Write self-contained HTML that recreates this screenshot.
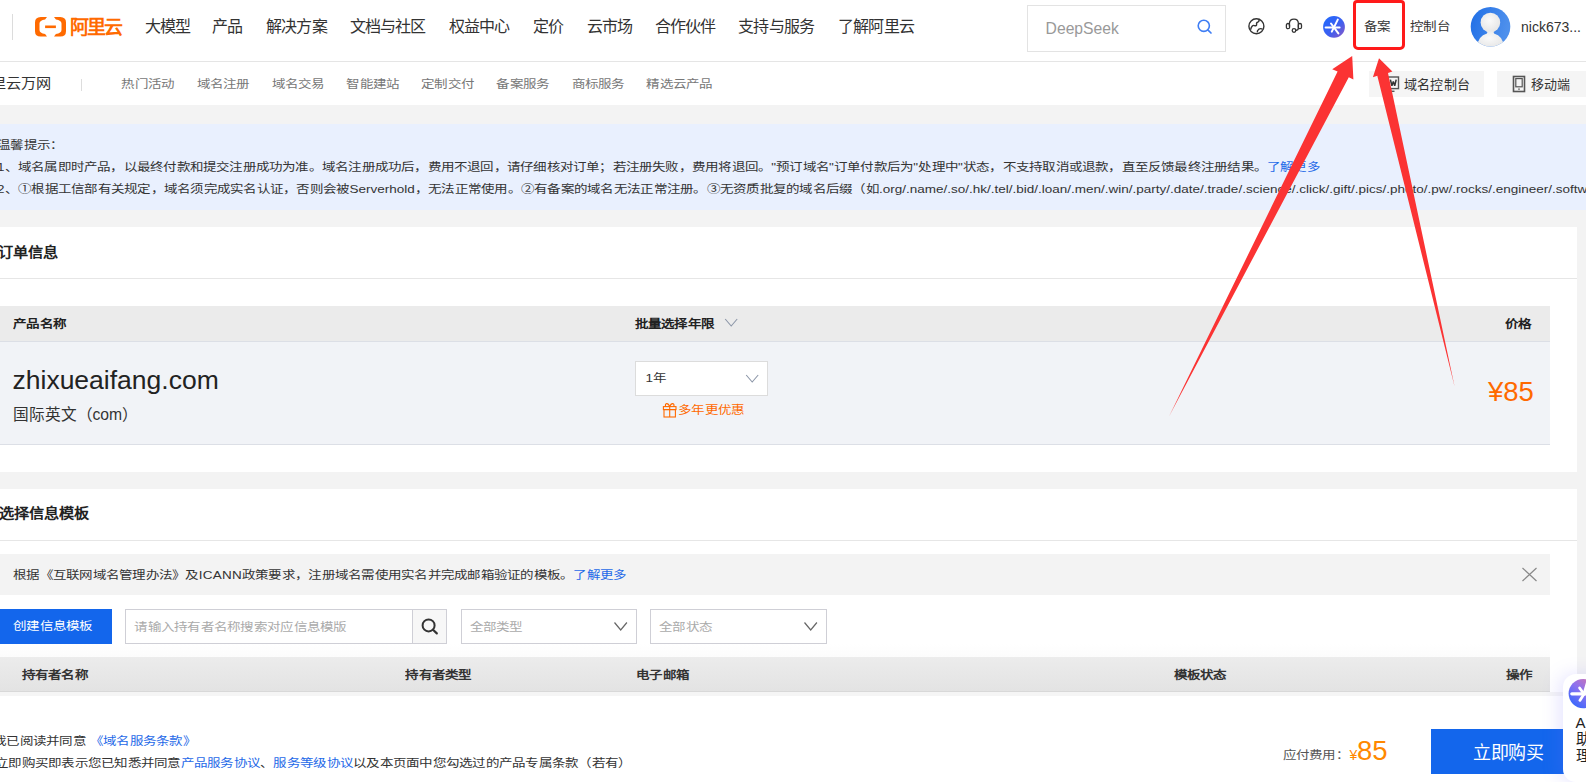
<!DOCTYPE html>
<html lang="zh-CN"><head><meta charset="utf-8">
<style>
*{margin:0;padding:0;box-sizing:border-box}
html,body{width:1586px;height:782px;overflow:hidden;background:#f3f3f3;font-family:"Liberation Sans",sans-serif;color:#333}
.a{position:absolute}
.t{position:absolute;white-space:nowrap;line-height:1}
.n{font-size:16px;letter-spacing:-0.8px;color:#333;top:19px}
.s{font-size:13.5px;letter-spacing:.26px;color:#777;top:78.3px}
.b{font-weight:bold}
.ln{color:#1f6ae8}
.l0{letter-spacing:0}
.q{transform:scaleY(.85);transform-origin:0 46%}
.q2{transform:scaleY(.9);transform-origin:0 46%}
</style></head><body>

<!-- top bar -->
<div class="a" style="left:0;top:0;width:1586px;height:61px;background:#fff"></div>
<div class="a" style="left:0;top:61px;width:1586px;height:1px;background:#e5e5e5"></div>
<div class="a" style="left:12px;top:14px;width:1px;height:26px;background:#dcdcdc"></div>

<!-- logo -->
<svg class="a" style="left:35px;top:17px" width="32" height="20" viewBox="0 0 32 20">
  <path d="M5.7 0 L12 0 L10.1 2.6 Q4.6 3.4 4.5 6.5 L4.5 13 Q4.6 16.2 10.1 17 L12 19.6 L5.7 19.6 Q0 19.4 0 14.2 L0 5.4 Q0 0.2 5.7 0 Z" fill="#ff6a00"/>
  <path d="M25.3 0 L19 0 L20.9 2.6 Q26.4 3.4 26.5 6.5 L26.5 13 Q26.4 16.2 20.9 17 L19 19.6 L25.3 19.6 Q31 19.4 31 14.2 L31 5.4 Q31 0.2 25.3 0 Z" fill="#ff6a00"/>
  <rect x="10.1" y="8.5" width="10.8" height="2.6" fill="#ff6a00"/>
</svg>
<div class="t b" style="left:69.8px;top:17.8px;font-size:19px;letter-spacing:-1.7px;color:#ff6a00">阿里云</div>

<div class="t n" style="left:144.5px">大模型</div>
<div class="t n" style="left:212px">产品</div>
<div class="t n" style="left:266px">解决方案</div>
<div class="t n" style="left:349.6px">文档与社区</div>
<div class="t n" style="left:448.7px">权益中心</div>
<div class="t n" style="left:533px">定价</div>
<div class="t n" style="left:586.5px">云市场</div>
<div class="t n" style="left:654.6px">合作伙伴</div>
<div class="t n" style="left:738.3px">支持与服务</div>
<div class="t n" style="left:838px">了解阿里云</div>

<!-- search -->
<div class="a" style="left:1027.3px;top:5px;width:198.7px;height:46.5px;border:1px solid #e3e3e3;background:#fff"></div>
<div class="t" style="left:1045.6px;top:20.5px;font-size:15.7px;color:#999">DeepSeek</div>
<svg class="a" style="left:1196px;top:18px" width="17" height="17" viewBox="0 0 17 17">
  <circle cx="7.8" cy="7.8" r="5.6" fill="none" stroke="#3f7ef4" stroke-width="1.6"/>
  <path d="M11.8 11.8 L15 15" stroke="#3f7ef4" stroke-width="1.7" stroke-linecap="round"/>
</svg>

<!-- globe -->
<svg class="a" style="left:1246px;top:16px" width="21" height="21" viewBox="0 0 21 21">
  <circle cx="10.4" cy="10.3" r="7.5" fill="none" stroke="#333" stroke-width="1.4"/>
  <path d="M12.9 3.2 Q13.6 5.2 11.8 6.2 Q10.2 6.5 10.6 8.4 Q10.6 10.3 8.4 9.6 Q6.2 8.5 4.5 13.7" fill="none" stroke="#333" stroke-width="1.4"/>
  <path d="M16.6 13.3 Q14.8 12 12.8 13.2 Q11 14.5 11.3 16.3" fill="none" stroke="#333" stroke-width="1.4"/>
</svg>
<!-- headset -->
<svg class="a" style="left:1284px;top:16px" width="20" height="20" viewBox="0 0 20 20">
  <path d="M5.4 10.5 V8 Q5.4 3.2 10 3.2 Q14.4 3.2 14.4 8 V12 Q14.4 14.3 11.6 14.5" fill="none" stroke="#333" stroke-width="1.3"/>
  <rect x="2.4" y="7.5" width="3.2" height="5.2" rx="1.5" fill="none" stroke="#333" stroke-width="1.3"/>
  <rect x="14.3" y="7.5" width="3.2" height="5.2" rx="1.5" fill="none" stroke="#333" stroke-width="1.3"/>
  <circle cx="10" cy="14.5" r="1.8" fill="none" stroke="#333" stroke-width="1.3"/>
</svg>
<!-- gradient ai icon -->
<svg class="a" style="left:1322px;top:15px" width="24" height="24" viewBox="0 0 24 24">
  <defs><linearGradient id="g1" x1="0" y1="0" x2="1" y2="1"><stop offset="0" stop-color="#1f6bff"/><stop offset="0.55" stop-color="#3d5ff0"/><stop offset="1" stop-color="#8d58c4"/></linearGradient></defs>
  <circle cx="12" cy="11.9" r="10.9" fill="url(#g1)"/>
  <path d="M3.6 12.4 H17.6" stroke="#fff" stroke-width="2" stroke-linecap="round"/>
  <path d="M15.8 4.6 L9.8 16.6" stroke="#fff" stroke-width="2" stroke-linecap="round"/>
  <path d="M9 8.5 L16.4 18.4" stroke="#fff" stroke-width="2" stroke-linecap="round"/>
</svg>

<div class="q2 t" style="left:1364px;top:20.2px;font-size:13.5px;color:#333">备案</div>
<div class="q2 t" style="left:1410px;top:20.2px;font-size:13.5px;letter-spacing:.26px;color:#333">控制台</div>

<!-- avatar -->
<svg class="a" style="left:1470px;top:6px" width="41" height="41" viewBox="0 0 41 41">
  <defs>
    <linearGradient id="g2" x1="0" y1="0" x2="1" y2="0.3"><stop offset="0" stop-color="#1f6ee6"/><stop offset="1" stop-color="#4e90ec"/></linearGradient>
    <radialGradient id="g3" cx="0.45" cy="0.4" r="0.6"><stop offset="0" stop-color="#fafafa"/><stop offset="1" stop-color="#e6e6e6"/></radialGradient>
    <clipPath id="cp"><circle cx="20.5" cy="20.7" r="19.8"/></clipPath>
  </defs>
  <circle cx="20.5" cy="20.7" r="19.8" fill="url(#g2)"/>
  <g clip-path="url(#cp)">
    <circle cx="20.4" cy="16.5" r="9.8" fill="url(#g3)"/>
    <path d="M17.5 25.5 H23.5 L24 27.5 Q33.5 30 34 42 H7 Q7.5 30 17 27.5 Z" fill="url(#g3)"/>
  </g>
</svg>
<div class="t" style="left:1521px;top:20px;font-size:14px;color:#333">nick673...</div>

<!-- second row -->
<div class="a" style="left:0;top:62px;width:1586px;height:43px;background:#fff"></div>
<div class="q2 t" style="left:-24px;top:75.8px;font-size:15.2px;color:#333">阿里云万网</div>
<div class="a" style="left:81px;top:78.5px;width:1px;height:12px;background:#ddd"></div>
<div class="q t s" style="left:121.4px">热门活动</div>
<div class="q t s" style="left:196.5px">域名注册</div>
<div class="q t s" style="left:271.7px">域名交易</div>
<div class="q t s" style="left:346.3px">智能建站</div>
<div class="q t s" style="left:421.2px">定制交付</div>
<div class="q t s" style="left:496.4px">备案服务</div>
<div class="q t s" style="left:571.5px">商标服务</div>
<div class="q t s" style="left:646.4px">精选云产品</div>

<div class="a" style="left:1369px;top:71px;width:115px;height:26px;background:#f5f5f5"></div>
<svg class="a" style="left:1387px;top:75px" width="13" height="18" viewBox="0 0 13 18">
  <rect x="1" y="2" width="10.5" height="11.6" fill="none" stroke="#555" stroke-width="1.4"/>
  <path d="M3.4 4.6 L4.9 10.8 L6.3 6.6 L7.7 10.8 L9.2 4.6" fill="none" stroke="#333" stroke-width="1.5" stroke-linejoin="bevel"/>
  <path d="M3.8 16.3 H7.5" stroke="#555" stroke-width="1.4"/>
</svg>
<div class="t" style="left:1404px;top:78px;font-size:13px;letter-spacing:.2px;color:#333">域名控制台</div>
<div class="a" style="left:1497px;top:71px;width:89px;height:26px;background:#f5f5f5"></div>
<svg class="a" style="left:1512px;top:75px" width="15" height="18" viewBox="0 0 15 18">
  <rect x="1.5" y="1.5" width="11" height="15" fill="none" stroke="#555" stroke-width="1.6"/>
  <rect x="3.8" y="3.6" width="6.4" height="8.2" fill="none" stroke="#555" stroke-width="1.2"/>
  <path d="M6.2 14.2 H7.8" stroke="#555" stroke-width="1.2"/>
</svg>
<div class="t" style="left:1531px;top:78px;font-size:13px;color:#333">移动端</div>

<!-- notice -->
<div class="a" style="left:0;top:124px;width:1586px;height:85.5px;background:#e9f0fe"></div>
<div class="q t" style="left:-3px;top:138.6px;font-size:13.5px;letter-spacing:.26px;color:#333">温馨提示：</div>
<div class="q t" style="left:-3px;top:161px;font-size:13.5px;letter-spacing:.215px;color:#333">1、域名属即时产品，以最终付款和提交注册成功为准。域名注册成功后，费用不退回，请仔细核对订单；若注册失败，费用将退回。"预订域名"订单付款后为"处理中"状态，不支持取消或退款，直至反馈最终注册结果。<span class="ln">了解更多</span></div>
<div class="q t" style="left:-3px;top:182.8px;font-size:13.5px;letter-spacing:.26px;color:#333">2、①根据工信部有关规定，域名须完成实名认证，否则会被<span class="l0">Serverhold</span>，无法正常使用。②有备案的域名无法正常注册。③无资质批复的域名后缀（如<span class="l0">.org/.name/.so/.hk/.tel/.bid/.loan/.men/.win/.party/.date/.trade/.science/.click/.gift/.pics/.photo/.pw/.rocks/.engineer/.software/.lol/.link</span></div>

<!-- order card -->
<div class="a" style="left:0;top:227px;width:1577px;height:244.6px;background:#fff"></div>
<div class="q2 t b" style="left:-2.4px;top:244.7px;font-size:15.2px;color:#222">订单信息</div>
<div class="a" style="left:0;top:278px;width:1577px;height:1px;background:#e6e6e6"></div>
<div class="a" style="left:0;top:306px;width:1550px;height:36px;background:#ebebeb;border-bottom:1px solid #dcdfe6"></div>
<div class="q t b" style="left:13px;top:318px;font-size:13.5px;letter-spacing:.26px;color:#222">产品名称</div>
<div class="q t b" style="left:634.7px;top:318px;font-size:13.5px;letter-spacing:.26px;color:#222">批量选择年限</div>
<svg class="a" style="left:724px;top:317px" width="15" height="11" viewBox="0 0 15 11"><path d="M1.2 2 L7.2 9 L13.2 2" fill="none" stroke="#8c96a8" stroke-width="1.1"/></svg>
<div class="q t b" style="left:1505px;top:318px;font-size:13.5px;letter-spacing:.26px;color:#222">价格</div>
<div class="a" style="left:0;top:342px;width:1550px;height:103px;background:#f1f3f7;border-bottom:1px solid #dcdfe6"></div>
<div class="t" style="left:12.5px;top:366.5px;font-size:26.5px;color:#222">zhixueaifang.com</div>
<div class="t" style="left:12.5px;top:406.5px;font-size:15.7px;color:#333">国际英文（com）</div>
<div class="a" style="left:635.4px;top:360.7px;width:132.2px;height:35px;background:#fff;border:1px solid #dcdcdc"></div>
<div class="q t" style="left:645.5px;top:372.1px;font-size:13.5px;letter-spacing:.26px;color:#333">1年</div>
<svg class="a" style="left:745px;top:373px" width="15" height="11" viewBox="0 0 15 11"><path d="M1.2 2 L7.2 9 L13.2 2" fill="none" stroke="#8c96a8" stroke-width="1.1"/></svg>
<svg class="a" style="left:662px;top:401.8px" width="16" height="17" viewBox="0 0 16 17">
  <rect x="1.4" y="4.6" width="12.6" height="3" fill="none" stroke="#ff6a00" stroke-width="1.1"/>
  <rect x="2" y="7.6" width="11.4" height="7.4" fill="none" stroke="#ff6a00" stroke-width="1.1"/>
  <path d="M7.7 4.6 V15" stroke="#ff6a00" stroke-width="1.1"/>
  <path d="M7.7 4.6 Q6.5 1.4 4.6 1.6 Q2.9 1.9 3.6 4.6 M7.7 4.6 Q8.9 1.4 10.8 1.6 Q12.5 1.9 11.8 4.6" fill="none" stroke="#ff6a00" stroke-width="1.1"/>
</svg>
<div class="q t" style="left:678px;top:403.5px;font-size:13.5px;letter-spacing:.26px;color:#ff6a00">多年更优惠</div>
<div class="t" style="left:1488px;top:377.5px;font-size:27.5px;color:#ff6a00">¥85</div>

<!-- template card -->
<div class="a" style="left:0;top:489px;width:1577px;height:300px;background:#fff"></div>
<div class="q2 t b" style="left:-1.2px;top:505.8px;font-size:15.2px;color:#222">选择信息模板</div>
<div class="a" style="left:0;top:540px;width:1577px;height:1px;background:#e6e6e6"></div>
<div class="a" style="left:0;top:554px;width:1550px;height:41px;background:#f3f3f3"></div>
<div class="q t" style="left:13px;top:569px;font-size:13.5px;letter-spacing:.26px;color:#333">根据《互联网域名管理办法》及ICANN政策要求，注册域名需使用实名并完成邮箱验证的模板。<span class="ln">了解更多</span></div>
<svg class="a" style="left:1520px;top:566px" width="19" height="17" viewBox="0 0 19 17"><path d="M2.5 2 L16.5 15 M16.5 2 L2.5 15" stroke="#888" stroke-width="1.2"/></svg>

<div class="a" style="left:0;top:609px;width:112px;height:35px;background:#1366ec"></div>
<div class="q t" style="left:13px;top:620.3px;font-size:13.5px;letter-spacing:.26px;color:#fff">创建信息模板</div>
<div class="a" style="left:125.3px;top:608.5px;width:322px;height:35.2px;background:#fff;border:1px solid #cfcfd6"></div>
<div class="a" style="left:412.3px;top:609.5px;width:34px;height:33.2px;background:#f7f7f7;border-left:1px solid #cfcfd6"></div>
<div class="q t" style="left:134.4px;top:620.7px;font-size:13.5px;letter-spacing:.26px;color:#aaa">请输入持有者名称搜索对应信息模版</div>
<svg class="a" style="left:420px;top:617px" width="20" height="19" viewBox="0 0 20 19">
  <circle cx="8.6" cy="8.4" r="6" fill="none" stroke="#333" stroke-width="2"/>
  <path d="M13 12.8 L16.8 16.4" stroke="#333" stroke-width="2.2" stroke-linecap="round"/>
</svg>
<div class="a" style="left:460.9px;top:608.5px;width:176.1px;height:35.2px;background:#fff;border:1px solid #cfcfd6"></div>
<div class="q t" style="left:469.5px;top:620.7px;font-size:13.5px;letter-spacing:.26px;color:#aaa">全部类型</div>
<svg class="a" style="left:613px;top:620px" width="15" height="12" viewBox="0 0 15 12"><path d="M1.5 2.5 L7.7 10 L13.9 2.5" fill="none" stroke="#666" stroke-width="1.2"/></svg>
<div class="a" style="left:650.3px;top:608.5px;width:176.3px;height:35.2px;background:#fff;border:1px solid #cfcfd6"></div>
<div class="q t" style="left:659px;top:620.7px;font-size:13.5px;letter-spacing:.26px;color:#aaa">全部状态</div>
<svg class="a" style="left:803px;top:620px" width="15" height="12" viewBox="0 0 15 12"><path d="M1.5 2.5 L7.7 10 L13.9 2.5" fill="none" stroke="#666" stroke-width="1.2"/></svg>

<div class="a" style="left:0;top:644px;width:1550px;height:13px;background:linear-gradient(#fff,#fcfcfc)"></div>
<div class="a" style="left:0;top:657px;width:1550px;height:35px;background:linear-gradient(#ececec,#e3e3e3);border-bottom:1px solid #d8d8d8"></div>
<div class="a" style="left:0;top:692px;width:1586px;height:4px;background:#f5f5f5"></div>
<div class="q t b" style="left:21.5px;top:669px;font-size:13.5px;letter-spacing:.26px;color:#333">持有者名称</div>
<div class="q t b" style="left:405.4px;top:669px;font-size:13.5px;letter-spacing:.26px;color:#333">持有者类型</div>
<div class="q t b" style="left:636.2px;top:669px;font-size:13.5px;letter-spacing:.26px;color:#333">电子邮箱</div>
<div class="q t b" style="left:1173.7px;top:669px;font-size:13.5px;letter-spacing:.26px;color:#333">模板状态</div>
<div class="q t b" style="left:1505.5px;top:669px;font-size:13.5px;letter-spacing:.26px;color:#333">操作</div>

<!-- bottom bar -->
<div class="a" style="left:0;top:696px;width:1586px;height:86px;background:#fff"></div>
<div class="q t" style="left:-7px;top:735px;font-size:13.5px;letter-spacing:.26px;color:#333">我已阅读并同意 <span class="ln">《域名服务条款》</span></div>
<div class="q t" style="left:-5px;top:757px;font-size:13.5px;letter-spacing:.26px;color:#333">立即购买即表示您已知悉并同意<span class="ln">产品服务协议</span>、<span class="ln">服务等级协议</span>以及本页面中您勾选过的产品专属条款（若有）</div>
<div class="q t" style="left:1282.6px;top:749px;font-size:13.5px;letter-spacing:.26px;color:#555">应付费用：</div>
<div class="t" style="left:1349.5px;top:748px;font-size:14px;color:#ff8800">¥</div>
<div class="t" style="left:1357px;top:737px;font-size:27.5px;color:#ff8800">85</div>
<div class="a" style="left:1431px;top:729px;width:140px;height:44.5px;background:#1366ec"></div>
<div class="t" style="left:1473px;top:743.5px;font-size:18px;letter-spacing:-0.5px;color:#fff">立即购买</div>

<!-- floating assistant -->
<div class="a" style="left:1563px;top:673.6px;width:60px;height:108.4px;background:#fff;border-radius:13px;box-shadow:-4px 0 18px rgba(120,110,255,0.18)"></div>
<svg class="a" style="left:1568px;top:678px" width="18" height="31" viewBox="0 0 18 31">
  <defs><linearGradient id="g4" x1="0.9" y1="0" x2="0.1" y2="1"><stop offset="0" stop-color="#d873a8"/><stop offset="0.45" stop-color="#8f72ee"/><stop offset="1" stop-color="#2a66ff"/></linearGradient></defs>
  <circle cx="15.2" cy="15.6" r="14.6" fill="url(#g4)"/>
  <path d="M3.8 15.8 H18" stroke="#fff" stroke-width="3.2" stroke-linecap="round"/>
  <path d="M11.6 10 L16 16 L11.9 22.4" fill="none" stroke="#fff" stroke-width="2.8" stroke-linecap="round" stroke-linejoin="round"/>
  <path d="M16 16 L19.5 4" stroke="#fff" stroke-width="2.8" stroke-linecap="round"/>
</svg>
<div class="t" style="left:1575.5px;top:714.5px;font-size:15px;color:#222;line-height:16.8px">A<br>助<br>理</div>

<!-- red arrows -->
<svg class="a" style="left:0;top:0" width="1586" height="782" viewBox="0 0 1586 782">
  <path d="M1169 416.5 L1337.6 71.5 L1332.2 69.2 L1352.2 56 L1353.4 79.5 L1348.8 77.3 Z" fill="#fb3333"/>
  <path d="M1454.6 386.5 L1377.3 75.8 L1372.9 77.3 L1379 58.2 L1392.4 71.5 L1388 73 Z" fill="#fb3333"/>
</svg>
<div class="a" style="left:1353px;top:0;width:52px;height:50.3px;border:3.4px solid #ff1a1a;border-radius:4px 4px 5px 5px"></div>

</body></html>
